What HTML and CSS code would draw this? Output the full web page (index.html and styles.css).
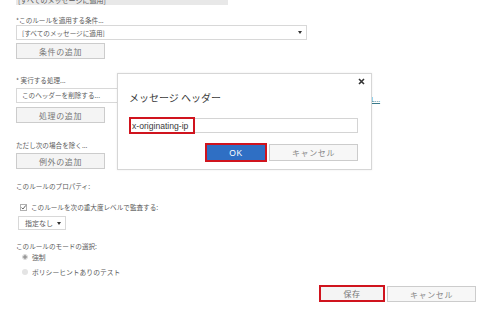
FILE: index.html
```html
<!DOCTYPE html>
<html lang="ja">
<head>
    <meta charset="UTF-8">
    <title>ルールの編集</title>
    <link rel="stylesheet" href="styles.css">
</head>
<body>

<div class="page">
    <div class="top-box"><span>[すべてのメッセージに適用]</span></div>

    <div class="label l1">*このルールを適用する条件...</div>
    <div class="select wide">
        <span>[すべてのメッセージに適用]</span>
        <span class="arrow"></span>
    </div>
    <button class="btn add b1">条件の追加</button>

    <div class="label l2">* 実行する処理...</div>
    <div class="row">
        <div class="select wide">
            <span>このヘッダーを削除する...</span>
            <span class="arrow"></span>
        </div>
        <a class="link">L...</a>
    </div>
    <button class="btn add b2">処理の追加</button>

    <div class="label l3">ただし次の場合を除く...</div>
    <button class="btn add b3">例外の追加</button>

    <div class="label l4">このルールのプロパティ:</div>
    <div class="check-row">
        <svg class="check" width="7" height="7" viewBox="0 0 7 7">
            <rect x="0.5" y="0.5" width="6" height="6" fill="#fff" stroke="#b0b0b0"/>
            <path d="M1.5 3.6 L3 5 L5.8 1.4" fill="none" stroke="#666" stroke-width="1"/>
        </svg>
        <span>このルールを次の重大度レベルで監査する:</span>
    </div>
    <div class="select small">
        <span>指定なし</span>
        <span class="arrow"></span>
    </div>

    <div class="label l5">このルールのモードの選択:</div>
    <div class="radio-row r1">
        <span class="radio on"></span>
        <span>強制</span>
    </div>
    <div class="radio-row r2">
        <span class="radio off"></span>
        <span>ポリシーヒントありのテスト</span>
    </div>

    <div class="footer">
        <button class="btn save marked">保存</button>
        <button class="btn cancel">キャンセル</button>
    </div>
    <div class="bottom-line"></div>
</div>

<div class="dialog">
    <svg class="close" width="7" height="7" viewBox="0 0 7 7">
        <path d="M1 1 L6 6 M6 1 L1 6" stroke="#333" stroke-width="1.6"/>
    </svg>
    <div class="dialog-title">メッセージ ヘッダー</div>
    <div class="field">
        <span class="field-text">x-originating-ip</span>
        <span class="hl"></span>
    </div>
    <div class="dialog-buttons">
        <button class="btn ok">OK</button>
        <button class="btn cancel d-cancel">キャンセル</button>
    </div>
</div>

</body>
</html>
```

FILE: styles.css
```css
body {
    margin: 0;
    background-color: #fff;
    font-family: "Noto Sans CJK JP", "Liberation Sans", sans-serif;
    color: #5a5a5a;
    position: relative;
    width: 480px;
    height: 320px;
    overflow: hidden;
}

.page {
    padding-left: 16px;
}

.top-box {
    width: 212px;
    height: 5px;
    overflow: hidden;
    background-color: #e8e8e8;
    font-size: 7px;
    line-height: 10px;
}

.top-box span {
    display: block;
    margin-top: -5px;
    padding-left: 2px;
}

.label {
    font-size: 6.6px;
    line-height: 10px;
    height: 10px;
    white-space: nowrap;
}

.l1 { margin-top: 10px; }
.l2 { margin-top: 16px; }
.l3 { margin-top: 17px; }
.l4 { margin-top: 12px; }
.l5 { margin-top: 11px; }

.select {
    display: flex;
    align-items: center;
    justify-content: space-between;
    box-sizing: border-box;
    border: 1px solid #d8d8d8;
    background-color: #fff;
    font-size: 6.6px;
    padding: 0 4px 0 5px;
}

.select.wide {
    width: 291px;
    height: 15px;
}

.select.small {
    width: 48px;
    height: 14px;
    margin: 4px 0 0 2px;
    padding-left: 6px;
    font-size: 7px;
}

.arrow {
    width: 0;
    height: 0;
    border-left: 2.5px solid transparent;
    border-right: 2.5px solid transparent;
    border-top: 3px solid #333;
}

.row {
    display: flex;
    align-items: center;
    margin-top: 1px;
}

.link {
    margin-left: 64px;
    margin-top: 8px;
    font-size: 6.6px;
    color: #3a7a8a;
    text-decoration: underline;
}

.btn {
    box-sizing: border-box;
    font-family: "Noto Sans CJK JP", "Liberation Sans", sans-serif;
    border: 1px solid #cccccc;
    background-color: #f4f4f4;
    color: #777;
    font-size: 8px;
    padding: 0;
    letter-spacing: 0.6px;
    display: block;
}

.btn.add {
    width: 89px;
    height: 16px;
    margin-top: 3px;
}

.check-row {
    display: flex;
    align-items: center;
    margin: 11px 0 0 4px;
    height: 10px;
    font-size: 6.6px;
    white-space: nowrap;
}

.check {
    margin-right: 4px;
}

.radio-row {
    display: flex;
    align-items: center;
    height: 10px;
    margin-left: 6px;
    font-size: 6.8px;
}

.r1 { margin-top: 1px; }
.r2 { margin-top: 5px; }

.radio {
    width: 6px;
    height: 6px;
    border-radius: 50%;
    margin-right: 4px;
    box-sizing: border-box;
}

.radio.on {
    border: 1px solid #d4d4d4;
    background: radial-gradient(circle, #999 0, #999 1.5px, #f0f0f0 2px);
}

.radio.off {
    background-color: #e4e4e4;
}

.footer {
    display: flex;
    justify-content: flex-end;
    gap: 2px;
    margin-top: 8px;
    padding-right: 4px;
}

.btn.save {
    width: 66px;
    height: 17px;
}

.btn.cancel {
    width: 89px;
    height: 16px;
    margin-top: 1px;
    background-color: #f7f7f7;
    color: #888;
}

.marked {
    border: 2px solid #d0141e;
}

.bottom-line {
    margin: 19px 0 0 -16px;
    height: 2px;
    background: linear-gradient(to right, #5a5a5a 0, #5a5a5a 155px, #8a8a8a 160px, #8a8a8a 212px, #5a5a5a 218px);
}

/* message header dialog */
.dialog {
    position: absolute;
    left: 117px;
    top: 73px;
    width: 255px;
    height: 97px;
    box-sizing: border-box;
    border: 1px solid #d6d6d6;
    background-color: #fff;
    box-shadow: 0 0 2px rgba(0, 0, 0, 0.08);
    padding: 0 13px 0 11px;
}

.close {
    position: absolute;
    right: 6px;
    top: 4px;
}

.dialog-title {
    margin-top: 16px;
    font-size: 10px;
    line-height: 16px;
    color: #3a3a3a;
    white-space: nowrap;
}

.field {
    position: relative;
    margin-top: 12px;
    height: 15px;
    box-sizing: border-box;
    border: 1px solid #d4d4d4;
    display: flex;
    align-items: center;
}

.field-text {
    font-family: "Liberation Sans", sans-serif;
    font-size: 8.6px;
    color: #3a3a3a;
    padding-left: 2px;
}

.hl {
    position: absolute;
    left: -1px;
    top: -2px;
    width: 66px;
    height: 17px;
    box-sizing: border-box;
    border: 2px solid #d0141e;
}

.dialog-buttons {
    display: flex;
    justify-content: flex-end;
    gap: 2px;
    margin-top: 10px;
}

.btn.ok {
    width: 62px;
    height: 19px;
    border: 2px solid #d0141e;
    background-color: #2f6fc4;
    color: #fff;
    font-family: "Liberation Sans", sans-serif;
    font-size: 8.5px;
}

.btn.d-cancel {
    height: 17px;
    margin-top: 1px;
}
```
